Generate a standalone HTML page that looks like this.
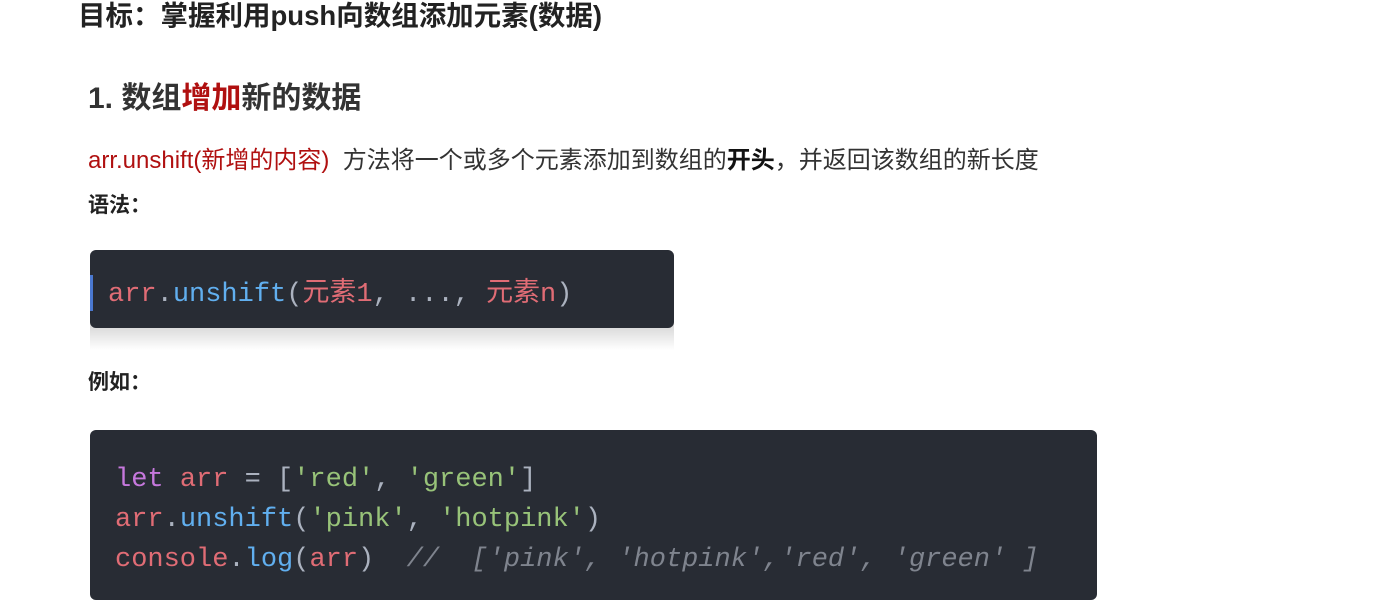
<!DOCTYPE html>
<html><head><meta charset="utf-8"><style>
body{margin:0;width:1381px;height:583px;background:#fff;position:relative;overflow:hidden;font-family:"Liberation Sans","Noto Sans CJK SC",sans-serif;}
.a{position:absolute;white-space:nowrap;}
.t{left:78px;top:-7px;font-size:27.5px;font-weight:bold;color:#222;}
.h{left:88px;top:73px;font-size:30px;font-weight:bold;color:#333;}
.r{color:#b01010;}
.p{left:88px;top:140px;font-size:24px;color:#333;}
.s{font-size:21px;font-weight:bold;color:#222;}
.code{position:absolute;background:#282c34;border-radius:6px;font-family:"Liberation Mono","Noto Sans CJK SC",monospace;font-size:27px;color:#abb2bf;white-space:pre;}
.k{color:#c678dd}.v{color:#e06c75}.f{color:#61afef}.g{color:#98c379}.c{color:#7f848e;font-style:italic}
</style></head><body>
<div class="a t">目标：掌握利用push向数组添加元素(数据)</div>
<div class="a h">1. 数组<span class="r">增加</span>新的数据</div>
<div class="a p"><span class="r">arr.unshift(新增的内容)</span>&nbsp; 方法将一个或多个元素添加到数组的<b style="color:#111">开头</b>，并返回该数组的新长度</div>
<div class="a s" style="left:88px;top:189px">语法：</div>
<div style="position:absolute;left:90px;top:318px;width:584px;height:32px;background:linear-gradient(#ccc,#fff);"></div>
<div class="code" style="left:90px;top:250px;width:584px;height:78px;">
<div style="position:absolute;left:0;top:25px;width:3px;height:36px;background:#4a78d0"></div>
<div style="position:absolute;left:18px;top:27px;line-height:36px"><span class="v">arr</span>.<span class="f">unshift</span>(<span class="v">元素1</span>, ..., <span class="v">元素n</span>)</div>
</div>
<div class="a s" style="left:88px;top:366px">例如：</div>
<div class="code" style="left:90px;top:430px;width:1007px;height:170px;">
<div style="position:absolute;left:25px;top:30px;line-height:40px"><span class="k">let</span> <span class="v">arr</span> = [<span class="g">'red'</span>, <span class="g">'green'</span>]
<span class="v">arr</span>.<span class="f">unshift</span>(<span class="g">'pink'</span>, <span class="g">'hotpink'</span>)
<span class="v">console</span>.<span class="f">log</span>(<span class="v">arr</span>)  <span class="c">//  ['pink', 'hotpink','red', 'green' ]</span></div>
</div>
</body></html>
